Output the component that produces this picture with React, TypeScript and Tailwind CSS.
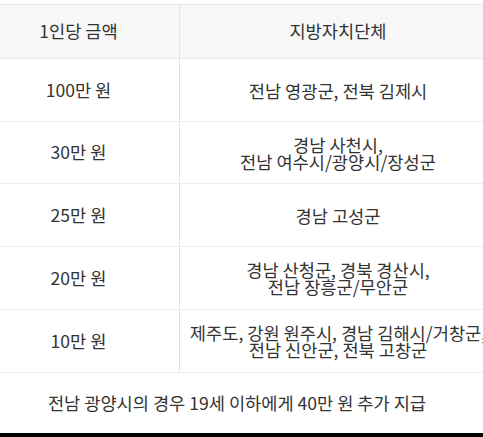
import React from 'react';

const rows: { amount: string; region: string[]; h: string }[] = [
  { amount: '100만 원', region: ['전남 영광군, 전북 김제시'], h: 'h-[63px]' },
  { amount: '30만 원', region: ['경남 사천시,', '전남 여수시/광양시/장성군'], h: 'h-[62px]' },
  { amount: '25만 원', region: ['경남 고성군'], h: 'h-[63px]' },
  { amount: '20만 원', region: ['경남 산청군, 경북 경산시,', '전남 장흥군/무안군'], h: 'h-[63px]' },
  { amount: '10만 원', region: ['제주도, 강원 원주시, 경남 김해시/거창군,', '전남 신안군, 전북 고창군'], h: 'h-[63px]' },
];

const App: React.FC = () => {
  return (
    <div
      className="w-[483px] h-[437px] overflow-hidden bg-white text-[17.6px] text-[#333]"
      style={{ fontFamily: '"Noto Sans CJK KR", "Noto Sans", sans-serif' }}
    >
      <div className="h-[4px]" />
      <div className="-ml-[22px] w-[518px] border-t border-[#e8e8e8]">
        {/* 헤더 */}
        <div className="grid grid-cols-[202px_316px] h-[54px] bg-[#f7f7f7] border-b border-[#e8e8e8]">
          <div className="flex items-center justify-center border-r border-[#e3e3e3]">1인당 금액</div>
          <div className="flex items-center justify-center">지방자치단체</div>
        </div>

        {rows.map((r) => (
          <div key={r.amount} className={`grid grid-cols-[202px_316px] ${r.h} border-b border-[#ececec]`}>
            <div className="flex items-center justify-center border-r border-[#e3e3e3]">{r.amount}</div>
            <div className="flex flex-col items-center justify-center leading-[17px] whitespace-nowrap">
              {r.region.map((line) => (
                <span key={line}>{line}</span>
              ))}
            </div>
          </div>
        ))}

        {/* 비고 */}
        <div className="h-[60px] flex items-center justify-center">
          전남 광양시의 경우 19세 이하에게 40만 원 추가 지급
        </div>
      </div>
      <div className="h-[4px] bg-black" />
    </div>
  );
};

export default App;
